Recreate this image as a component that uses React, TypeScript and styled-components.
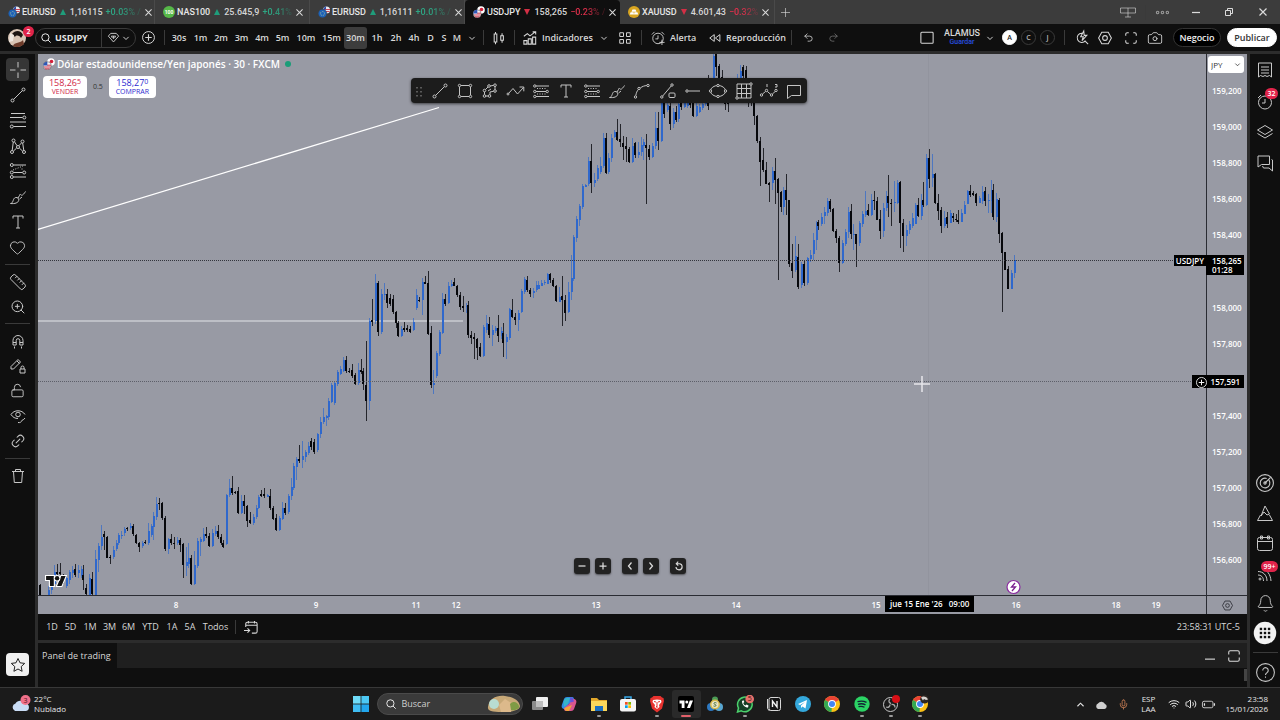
import React from "react";
import styled, { createGlobalStyle, css } from "styled-components";
import { Heart, Ruler, ZoomIn, LockOpen, Link2, Bell, Wifi, Volume2, Mic, Camera, Undo2, Redo2 } from "lucide-react";

const GlobalStyle = createGlobalStyle`
  * { box-sizing: border-box; }
  body { margin: 0; background: #0f0f0f; color: #dbdbdb; font-family: "Open Sans", "Noto Sans", sans-serif; font-size: 9px; line-height: 12px; }
  button, select, input { font: inherit; color: inherit; border: 0; padding: 0; margin: 0; background: none; }
  ul { list-style: none; margin: 0; padding: 0; }
  svg { display: block; flex: none; }
`;

const Page = styled.div`
  display: flex;
  flex-direction: column;
  height: 100vh;
  min-height: 600px;
  overflow: hidden;
`;

const Spacer = styled.div`
  flex: 1;
`;

/* ---------- icons ---------- */

const Glyph = styled.svg.attrs({ viewBox: "0 0 16 16", "aria-hidden": true })<{ $size?: number }>`
  width: ${(p) => p.$size ?? 16}px;
  height: ${(p) => p.$size ?? 16}px;
  fill: none;
  stroke: currentColor;
  stroke-width: 1;
  overflow: visible;
`;

const Dot = ({ x, y, r = 1.5 }: { x: number; y: number; r?: number }) => <circle cx={x} cy={y} r={r} />;

const CrossIcon = () => (
  <Glyph><path d="M8 0v5.500M8 10.500V16M0 8h5.500M10.500 8H16" /></Glyph>
);
const TrendIcon = () => (
  <Glyph><Dot x={2.5} y={13.500} /><Dot x={13.500} y={2.500} /><path d="M3.700 12.300L12.300 3.700" /></Glyph>
);
const FibIcon = () => (
  <Glyph><path d="M1 1.500h14M0 5.500h12.500M0 10h16M3.500 14.500H16" /><Dot x={14.300} y={5.500} /><Dot x={1.800} y={14.500} /></Glyph>
);
const PatternIcon = () => (
  <Glyph>
    <Dot x={3.500} y={2.500} /><Dot x={12.500} y={3.500} /><Dot x={2} y={14} /><Dot x={8} y={9} /><Dot x={14} y={14} />
    <path d="M2.200 12.400L3.300 4M4.500 3.800L7 7.700M9 7.700L11.600 4.800M12.700 5.100L13.800 12.500M3.300 13.200L6.700 10M9.300 10L12.700 13.200" />
  </Glyph>
);
const ForecastIcon = () => (
  <Glyph>
    <Dot x={1.800} y={2} /><Dot x={1.800} y={9.500} /><Dot x={1.800} y={14} /><Dot x={14.200} y={9.500} />
    <path d="M3.500 2H16M3.500 9.500h9M3.500 14H16" /><path d="M3 7l10-4M12 5.500v2" strokeDasharray="1 1.500" />
  </Glyph>
);
const BrushIcon = () => (
  <Glyph><path d="M0.500 14.500c3 0 2.200-5.500 5.200-6 2-.300 3.300 1.200 3 2.900-.400 2.300-3.700 3.600-8.200 3.100zM8 9l1.500-2.500M9.500 10l2.500-2M9.500 6.500c0-1.500 1-1.200 1.700-.500.900.900 2.600-.800 4.300-3.500" /></Glyph>
);
const TextIcon = () => (
  <Glyph><path d="M3 4.500V2h10v2.500M8 2v12M6 14h4" /></Glyph>
);
const RectIcon = () => (
  <Glyph><path d="M2.500 4v8M13.500 4v8M4 2.500h8M4 13.500h8" /><Dot x={2.500} y={2.500} r={1.200} /><Dot x={13.500} y={2.500} r={1.200} /><Dot x={2.500} y={13.500} r={1.200} /><Dot x={13.500} y={13.500} r={1.200} /></Glyph>
);
const PathIcon = () => (
  <Glyph>
    <Dot x={13} y={2.200} r={1.300} /><Dot x={7} y={3} r={1.300} /><Dot x={2.500} y={7.500} r={1.300} /><Dot x={2.500} y={13} r={1.300} /><Dot x={13} y={8} r={1.300} /><Dot x={7.500} y={13} r={1.300} />
    <path d="M8.300 3L11.700 2.300M13 3.500v3.200M6 4L3.500 6.500M2.500 8.800v2.900M3.800 13h2.400M8 11.800V9l3.700-.800M6 8l3-2" />
  </Glyph>
);
const ZigArrowIcon = () => (
  <Glyph><Dot x={0} y={11} r={1} /><path d="M.700 10.300L5 5.500l4.500 5.500 6-6.500M11.500 4H15.800v4.300" /></Glyph>
);
const PositionIcon = () => (
  <Glyph>
    <Dot x={1.800} y={3} r={1.200} /><Dot x={1.800} y={8.500} r={1.200} /><Dot x={14.200} y={8.500} r={1.200} /><Dot x={1.800} y={13.500} r={1.200} />
    <path d="M3 3h13M3 8.500h10M3 13.500h13" /><path d="M4 5.500h9M4 11h9" strokeDasharray="1 1.500" />
  </Glyph>
);
const CurveIcon = () => (
  <Glyph><Dot x={1.500} y={14} r={1.200} /><Dot x={5} y={5.500} r={1.200} /><Dot x={14} y={2.500} r={1.200} /><path d="M1.800 12.500C2.200 10 3 8 4.300 6.700M6.300 5C8.500 3.200 10.500 2.800 12.700 2.500" /></Glyph>
);
const InfoLineIcon = () => (
  <Glyph><Dot x={1.800} y={14} r={1.200} /><Dot x={12} y={2} r={1.200} /><path d="M2.700 13L11.200 3" /><rect x="9" y="10" width="6" height="4.500" rx="1" /></Glyph>
);
const RayIcon = () => (
  <Glyph><Dot x={2} y={8} r={1.200} /><path d="M3.500 8H15" /></Glyph>
);
const EllipseIcon = () => (
  <Glyph><ellipse cx="8" cy="8" rx="7.500" ry="5.500" /><g fill="#1f1f1f"><Dot x={8} y={2.500} r={1.200} /><Dot x={8} y={13.500} r={1.200} /><Dot x={0.500} y={8} r={1.200} /><Dot x={15.500} y={8} r={1.200} /></g></Glyph>
);
const GridIcon = () => (
  <Glyph><path d="M1 1h14v14H1zM5.500 1v14M10.500 1v14M1 5.500h14M1 10.500h14" /><g fill="#1f1f1f"><Dot x={15} y={1} r={1.200} /><Dot x={1} y={15} r={1.200} /></g></Glyph>
);
const WaveIcon = () => (
  <Glyph><Dot x={0.500} y={12} r={1.200} /><Dot x={5.500} y={7.500} r={1.200} /><Dot x={10.500} y={12} r={1.200} /><Dot x={15} y={7.500} r={1.200} /><path d="M1.500 11L4.500 8.500M6.400 8.500L9.500 11.200M11.400 11L14.200 8.500M6 1v3M14 1.500h2v2.500h-2" /></Glyph>
);
const CommentIcon = () => (
  <Glyph><path d="M1.500 2.500h13v10H5.500l-4 3z" /></Glyph>
);
const MagnetIcon = () => (
  <Glyph><path d="M3 12V7.500a5 5 0 0 1 10 0V12h-3.200V7.500a1.800 1.800 0 0 0-3.600 0V12zM3 9.500h3.200M9.800 9.500H13M4.500 13.500v2M11.500 13.500v2" /></Glyph>
);
const PencilLockIcon = () => (
  <Glyph><path d="M1 11V8.500L8 1.500l2.500 2.500-7 7zM7 3l2.500 2.500M10 11h5v4h-5zM11 11V9.500a1.500 1.500 0 0 1 3 0V11" /></Glyph>
);
const EyeIcon = () => (
  <Glyph><path d="M1 6.500C4 1.500 12 1.500 15 6.500M1 6.500c1.800 2.800 4 4 7 4" /><Dot x={8} y={6.500} r={2.300} /><path d="M8 14.500c2 .500 3.500-.500 3.800-2 1.500-.500 2.500-1.500 3.200-2.500" /></Glyph>
);
const TrashIcon = () => (
  <Glyph><path d="M2 3.500h12M5.500 3.500v-2h5v2M3.500 3.500l.800 11h7.400l.800-11" /></Glyph>
);
const StarIcon = () => (
  <Glyph><path d="M8 1.500l2 4.300 4.700.600-3.500 3.200.900 4.700L8 12l-4.100 2.300.900-4.700L1.300 6.400 6 5.800z" /></Glyph>
);
const ListIcon = () => (
  <Glyph><path d="M1.500 1h13v14l-2-1.500-2.500 1-2-1-2 1-2.500-1-2 1.500zM4 5h8M4 8h8M4 11h8" /></Glyph>
);
const ClockIcon = () => (
  <Glyph><circle cx="8" cy="9.500" r="6.500" /><path d="M8 6v4H5M1 5l3-3" /></Glyph>
);
const LayersIcon = () => (
  <Glyph><path d="M8 1.500l7.500 4.500L8 10.500 0.500 6zM0.500 9.500L8 14l7.500-4.500" /></Glyph>
);
const ChatIcon = () => (
  <Glyph><path d="M1 1h11.500v8.500H4.500L1 12zM14.500 4.500l1 .500v11l-3.500-3H6.500l-1-2" /></Glyph>
);
const RadarIcon = () => (
  <Glyph $size={18}><circle cx="8" cy="8" r="7.500" /><path d="M11.500 5.500a4.300 4.300 0 1 1-2-1.500M8 8l5-5" /><Dot x={8} y={8} r={1} /></Glyph>
);
const MountainIcon = () => (
  <Glyph><path d="M8 1L12.500 9l-2.500 1-3-3-3 4zM3.500 10L0.500 15.500h15L12.500 10" /></Glyph>
);
const CalendarIcon = () => (
  <Glyph><rect x="0.500" y="2.500" width="15" height="13" rx="2" /><path d="M0.500 6.500h15" /><path d="M3.500 1h2v3h-2zM10.500 1h2v3h-2z" /></Glyph>
);
const StreamIcon = () => (
  <Glyph><Dot x={3} y={14} r={1} /><path d="M1 10c3 0 5.500 2 5.500 6M1 6.500C6 6.500 10 10 10 16M5 4c5 1 8.500 5 9 12" /></Glyph>
);
const AppsIcon = () => (
  <Glyph $size={24}><circle cx="8" cy="8" r="7.500" fill="#f2f2f2" stroke="none" /><g fill="#0f0f0f" stroke="none">{[4.500, 7.200, 9.900].map((x) => [4.500, 7.200, 9.900].map((y) => <rect key={`${x}-${y}`} x={x} y={y} width="1.600" height="1.600" />))}</g></Glyph>
);
const HelpIcon = () => (
  <Glyph $size={19}><circle cx="8" cy="8" r="7.500" strokeWidth=".900" /><path d="M5.700 6.300a2.300 2.300 0 1 1 3.600 1.800C8.400 8.700 8 9.100 8 10M8 11.300v1.200" strokeWidth=".900" /></Glyph>
);
const ChevronDown = ({ size = 6 }: { size?: number }) => (
  <Glyph $size={size}><path d="M1 5l7 7 7-7" strokeWidth="2.500" /></Glyph>
);
const CloseIcon = ({ size = 7 }: { size?: number }) => (
  <Glyph $size={size}><path d="M1 1l14 14M15 1L1 15" strokeWidth="2.300" /></Glyph>
);
const PlusIcon = ({ size = 10 }: { size?: number }) => (
  <Glyph $size={size}><path d="M8 0v16M0 8h16" strokeWidth="1.600" opacity=".700" /></Glyph>
);
const PlusCircle = ({ size = 13 }: { size?: number }) => (
  <Glyph $size={size}><circle cx="8" cy="8" r="7.300" strokeWidth="1.200" /><path d="M8 4v8M4 8h8" strokeWidth="1.400" /></Glyph>
);
const SearchIcon = ({ size = 10 }: { size?: number }) => (
  <Glyph $size={size}><circle cx="7" cy="7" r="5.800" strokeWidth="1.600" /><path d="M11.300 11.300L15.500 15.500" strokeWidth="1.600" /></Glyph>
);
const HexIcon = ({ size = 14 }: { size?: number }) => (
  <Glyph $size={size}><path d="M4.300 1.500h7.400L15.300 8l-3.600 6.500H4.300L0.700 8z" strokeWidth="1.200" /><circle cx="8" cy="8" r="2.700" strokeWidth="1.200" /></Glyph>
);
const CornersIcon = ({ size = 12 }: { size?: number }) => (
  <Glyph $size={size}><path d="M1 5V3a2 2 0 0 1 2-2h2M11 1h2a2 2 0 0 1 2 2v2M15 11v2a2 2 0 0 1-2 2h-2M5 15H3a2 2 0 0 1-2-2v-2" strokeWidth="1.400" /></Glyph>
);
const FrameIcon = () => (
  <Glyph $size={12}><path d="M1 6V3a2 2 0 0 1 2-2h10a2 2 0 0 1 2 2v3M15 10v3a2 2 0 0 1-2 2H3a2 2 0 0 1-2-2v-3" strokeWidth="1.400" /></Glyph>
);

/* ---------- symbol tabs ---------- */

const TabBar = styled.nav`
  display: flex;
  height: 24px;
  background: #3c3c3c;
`;

const Tab = styled.div<{ $active?: boolean }>`
  display: flex;
  align-items: center;
  width: 155px;
  padding: 0 4px 0 8px;
  gap: 2px;
  background: ${(p) => (p.$active ? "#0f0f0f" : "transparent")};
  border-right: 1px solid ${(p) => (p.$active ? "#0f0f0f" : "#4a4a4a")};
  border-radius: ${(p) => (p.$active ? "4px 4px 0 0" : "0")};
  font-family: Roboto, "Open Sans", sans-serif;
  font-weight: 500;
`;

const TabSymbol = styled.a`
  color: #e6e6e6;
  text-decoration: none;
`;

const TabQuote = styled.span`
  color: #d6d6d6;
`;

const Change = styled.span<{ $up: boolean }>`
  flex: 1;
  padding-left: 1px;
  white-space: nowrap;
  color: ${(p) => (p.$up ? "#2ea583" : "#e0304c")};
  mask-image: linear-gradient(90deg, #000 40%, rgba(0, 0, 0, 0.2));
`;

const Triangle = styled.i<{ $up: boolean }>`
  border: 3px solid transparent;
  border-top-width: ${(p) => (p.$up ? 0 : 6)}px;
  border-bottom-width: ${(p) => (p.$up ? 6 : 0)}px;
  border-${(p) => (p.$up ? "bottom" : "top")}-color: ${(p) => (p.$up ? "#1f9d7b" : "#d32f45")};
  margin: 0 2px;
`;

const IconButton = styled.button<{ $w?: number }>`
  display: flex;
  align-items: center;
  justify-content: center;
  width: ${(p) => p.$w ?? 20}px;
  flex: none;
`;

const Pipe = styled.i<{ $m?: number; $h?: number }>`
  align-self: center;
  width: 1px;
  height: ${(p) => p.$h ?? 15}px;
  margin: 0 ${(p) => p.$m ?? 0}px;
  background: #3a3a3a;
`;

const FlagIcon = ({ kind }: { kind: string }) => (
  <svg width="12" height="12" viewBox="0 0 12 12" aria-hidden>
    {kind === "eur" && (<><circle cx="8.500" cy="4" r="3.500" fill="#e8e8f0" /><path d="M5 3.500h7M5.500 5.500h6" stroke="#d04a58" /><path d="M8 .500h-1L5 3.500h3z" fill="#2b4ba8" /><circle cx="4.500" cy="7.500" r="4.300" fill="#1e63b8" stroke="#3c3c3c" strokeWidth=".500" /><circle cx="4.500" cy="7.500" r="2" fill="none" stroke="#9db8a0" strokeDasharray=".800 .800" /></>)}
    {kind === "jpy" && (<><circle cx="8" cy="4" r="3.800" fill="#fff" /><circle cx="8.500" cy="3.500" r="1.800" fill="#d3203a" /><circle cx="4.200" cy="7.800" r="4" fill="#f0f0f4" stroke="#222" strokeWidth=".400" /><path d="M1 9h6.500M2 10.800h4.500M4 7.200h4" stroke="#d0384c" /><path d="M.300 7.500a4 4 0 0 1 4-3.700v3.700z" fill="#2f57b5" /></>)}
    {kind === "nas" && (<><circle cx="6" cy="6" r="6" fill="#56b848" /><text x="6" y="8" fontSize="5" fontWeight="700" fill="#fff" textAnchor="middle">100</text></>)}
    {kind === "xau" && (<><circle cx="6" cy="6" r="6" fill="#d9a520" /><path d="M4.500 3.500h3l1 2.200h-5zM2.600 6.300h3l.400 2.200H1.800zM6.400 6.300h3l.800 2.200H6z" fill="#fff" /></>)}
  </svg>
);

const tabs = [
  { kind: "eur", symbol: "EURUSD", price: "1,16115", change: "+0.03% /", up: true },
  { kind: "nas", symbol: "NAS100", price: "25.645,9", change: "+0.41%", up: true },
  { kind: "eur", symbol: "EURUSD", price: "1,16111", change: "+0.01% /", up: true },
  { kind: "jpy", symbol: "USDJPY", price: "158,265", change: "−0.23% /", up: false, active: true },
  { kind: "xau", symbol: "XAUUSD", price: "4.601,43", change: "−0.32%", up: false },
];

/* ---------- top toolbar ---------- */

const TopBar = styled.header`
  display: flex;
  align-items: center;
  height: 27px;
  padding: 0 3px 0 8px;
  background: #0f0f0f;
  color: #d8d8d8;
  font-weight: 600;
`;

const Avatar = styled.div`
  position: relative;
  width: 18px;
  height: 18px;
  margin-right: 9px;
`;

const Badge = styled.span<{ $inner?: boolean }>`
  position: absolute;
  top: ${(p) => (p.$inner ? -1 : -3)}px;
  right: ${(p) => (p.$inner ? -1 : -8)}px;
  min-width: 11px;
  height: 11px;
  padding: 0 2px;
  border-radius: 6px;
  background: #e0244a;
  color: #fff;
  font-size: 7px;
  font-weight: 600;
  line-height: 11px;
  text-align: center;
`;

const SearchPill = styled.div`
  display: flex;
  align-items: center;
  width: 101px;
  height: 20px;
  border: 1px solid #3a3a3a;
  border-radius: 10px;
  overflow: hidden;
`;

const SymbolButton = styled.button`
  display: flex;
  align-items: center;
  gap: 4px;
  width: 66px;
  height: 18px;
  padding-left: 5px;
  border-right: 1px solid #3a3a3a;
  color: #e8e8e8;
  font-weight: 700;
`;

const GemButton = styled.button`
  display: flex;
  flex: 1;
  align-items: center;
  justify-content: center;
  gap: 4px;
`;

const TimeButton = styled.button<{ $w: number; $active?: boolean }>`
  width: ${(p) => p.$w}px;
  height: 22px;
  border-radius: 3px;
  text-align: center;
  white-space: nowrap;
  ${(p) => p.$active && css`background: #3d3d3d;`}
`;

const LabelButton = styled.button<{ $w: number; $indent?: boolean }>`
  display: flex;
  align-items: center;
  gap: 5px;
  width: ${(p) => p.$w}px;
  margin-left: ${(p) => (p.$indent ? 5 : 0)}px;
  white-space: nowrap;
`;

const LayoutName = styled.button`
  display: flex;
  flex-direction: column;
  align-items: center;
  width: 36px;
  margin-left: 6px;
  line-height: 10px;
  color: #d8d8d8;
  font-family: Roboto, "Open Sans", sans-serif;
  font-weight: 500;
  small { color: #2950e0; font-size: 7px; line-height: 9px; }
`;

const Round = styled.button<{ $on?: boolean }>`
  width: 15px;
  height: 15px;
  margin: 0 2px;
  border: 1px solid ${(p) => (p.$on ? "#fff" : "#3a3a3a")};
  border-radius: 50%;
  background: ${(p) => (p.$on ? "#fff" : "transparent")};
  color: ${(p) => (p.$on ? "#222" : "#bbb")};
  font-size: 7px;
  line-height: 12px;
  text-align: center;
`;

const Pill = styled.button<{ $light?: boolean }>`
  width: ${(p) => (p.$light ? 50 : 48)}px;
  height: 19px;
  margin-left: 6px;
  border: 1px solid ${(p) => (p.$light ? "#fff" : "#333")};
  border-radius: 10px;
  background: ${(p) => (p.$light ? "#fff" : "#000")};
  color: ${(p) => (p.$light ? "#333" : "#f0f0f0")};
  line-height: 16px;
`;

const timeframes: [string, number][] = [
  ["30s", 22], ["1m", 21], ["2m", 20], ["3m", 21], ["4m", 20], ["5m", 21], ["10m", 26], ["15m", 25], ["30m", 23],
  ["1h", 20], ["2h", 18], ["4h", 18], ["D", 15], ["S", 12], ["M", 14],
];

/* ---------- workspace ---------- */

const Workspace = styled.div`
  display: flex;
  flex: 1;
  min-height: 0;
  gap: 3px;
  padding-top: 3px;
  background: #2c2c2c;
`;

const Sidebar = styled.aside<{ $w: number }>`
  display: flex;
  flex-direction: column;
  align-items: center;
  flex: none;
  width: ${(p) => p.$w}px;
  padding-top: ${(p) => (p.$w > 32 ? 3 : 0)}px;
  background: #0f0f0f;
  color: #c8c8c8;
`;

const ToolGroup = styled.div<{ $h: number }>`
  display: grid;
  grid-auto-rows: 1fr;
  justify-items: center;
  align-items: center;
  height: ${(p) => p.$h}px;
`;

const ToolButton = styled.button<{ $on?: boolean; $light?: boolean }>`
  position: relative;
  display: flex;
  align-items: center;
  justify-content: center;
  width: 23px;
  height: 23px;
  border-radius: 4px;
  ${(p) => p.$on && css`background: #363636;`}
  ${(p) => p.$light && css`background: #f0f0f0; color: #222; margin-bottom: 11px;`}
`;

const Rule = styled.hr`
  width: 25px;
  height: 1px;
  margin: 4px 0;
  border: 0;
  background: #3a3a3a;
`;

const Center = styled.main`
  display: flex;
  flex: 1;
  flex-direction: column;
  min-width: 0;
`;

const ChartGrid = styled.section`
  display: grid;
  flex: 1;
  grid-template-columns: minmax(0, 1fr) 41px;
  grid-template-rows: minmax(0, 1fr) 19px;
  min-height: 0;
  background: #989aa4;
`;

const Plot = styled.div`
  position: relative;
  min-height: 0;
`;

const PlotSvg = styled.svg`
  position: absolute;
  inset: 0;
  width: 100%;
  height: 100%;
`;

const Legend = styled.div`
  position: relative;
  display: flex;
  flex-direction: column;
  gap: 5px;
  width: 270px;
  padding: 3px 0 0 5px;
`;

const TitleRow = styled.h1`
  display: flex;
  align-items: center;
  gap: 2px;
  margin: 0;
  color: #fff;
  font-size: 10px;
  font-weight: 600;
  line-height: 14px;
  white-space: nowrap;
  i { width: 6px; height: 6px; margin-left: 3px; border-radius: 50%; background: #1a9d78; }
`;

const TradeRow = styled.div`
  display: flex;
  align-items: center;
  gap: 6px;
  color: #333;
  font-size: 7px;
`;

const TradeButton = styled.button<{ $buy?: boolean }>`
  display: flex;
  flex-direction: column;
  align-items: center;
  justify-content: center;
  width: ${(p) => (p.$buy ? 47 : 44)}px;
  height: 22px;
  border-radius: 4px;
  background: #fff;
  color: ${(p) => (p.$buy ? "#2b2bd0" : "#d02846")};
  line-height: 9px;
  b { font-size: 9px; font-weight: 400; }
  sup { font-size: 7px; line-height: 0; vertical-align: 2px; }
`;

const FloatBar = styled.div`
  position: absolute;
  top: 24px;
  left: calc(50% - 211px);
  display: flex;
  align-items: center;
  width: 396px;
  height: 25px;
  border-radius: 4px;
  background: #1c1c1c;
  color: #c4c4c4;
  box-shadow: 0 1px 3px rgba(0, 0, 0, 0.6);
`;

const FloatButton = styled.button`
  display: flex;
  flex: 1;
  align-items: center;
  justify-content: center;
`;

const NavBar = styled.div`
  position: absolute;
  bottom: 21px;
  left: calc(50% - 48px);
  display: flex;
  gap: 5px;
`;

const NavButton = styled.button<{ $gap?: boolean }>`
  display: flex;
  align-items: center;
  justify-content: center;
  width: 16px;
  height: 16px;
  margin-left: ${(p) => (p.$gap ? 6 : 0)}px;
  border-radius: 3px;
  background: #222;
  color: #ddd;
  box-shadow: 0 1px 2px rgba(0, 0, 0, 0.5);
`;

const Watermark = styled.svg`
  position: absolute;
  left: 7px;
  bottom: 5px;
`;

const SymbolTag = styled.span`
  position: absolute;
  top: 201px;
  right: 0;
  padding: 0 2px;
  background: #000;
  color: #fff;
  font-size: 8px;
  font-weight: 600;
  line-height: 11px;
`;

const PriceAxis = styled.div`
  position: relative;
  display: flex;
  flex-direction: column;
  padding: 2px 0 17px;
  border-left: 1px solid #2a2c33;
  color: #fff;
  font-size: 8px;
  font-weight: 600;
`;

const Currency = styled.label`
  display: flex;
  align-items: center;
  width: 36px;
  height: 17px;
  margin-left: 1px;
  padding: 0 4px 0 3px;
  border-radius: 3px;
  background: #fff;
  color: #333;
  font-weight: 400;
  select { flex: 1; width: 20px; appearance: none; outline: 0; }
`;

const PriceList = styled.ul`
  display: flex;
  flex: 1;
  flex-direction: column;
`;

const PriceItem = styled.li`
  display: flex;
  flex: 1;
  align-items: center;
  padding-left: 5px;
`;

const PriceTag = styled.div<{ $top: number; $wide?: boolean }>`
  position: absolute;
  top: ${(p) => p.$top}px;
  right: 3px;
  width: ${(p) => (p.$wide ? 52 : 38)}px;
  padding: 1px 0 ${(p) => (p.$wide ? 0 : 1)}px ${(p) => (p.$wide ? 0 : 6)}px;
  display: flex;
  flex-direction: ${(p) => (p.$wide ? "row" : "column")};
  align-items: ${(p) => (p.$wide ? "center" : "flex-start")};
  justify-content: space-evenly;
  background: #000;
  color: #fff;
  line-height: ${(p) => (p.$wide ? 12 : 9)}px;
`;

const TimeAxis = styled.div`
  position: relative;
  display: flex;
  align-items: center;
  overflow: hidden;
  border-top: 1px solid #2a2c33;
  color: #fff;
  font-size: 8px;
  font-weight: 600;
`;

const TimeSlot = styled.span<{ $span: number }>`
  display: flex;
  flex: ${(p) => p.$span} 1 0;
  width: 0;
  justify-content: flex-end;
  b { font-weight: 600; transform: translateX(50%); }
`;

const TimeTag = styled.span`
  position: absolute;
  top: 0;
  left: 847px;
  padding: 0 5px;
  background: #000;
  line-height: 16px;
  white-space: pre;
`;

const AxisCorner = styled.button`
  display: flex;
  align-items: center;
  justify-content: center;
  border-top: 1px solid #2a2c33;
  border-left: 1px solid #2a2c33;
  color: #2a2c33;
`;

const RangeBar = styled.div`
  display: flex;
  align-items: center;
  height: 26px;
  padding: 0 7px 0 5px;
  background: #0f0f0f;
  color: #d8d8d8;
  white-space: nowrap;
`;

const RangeButton = styled.button<{ $w: number }>`
  width: ${(p) => p.$w}px;
  text-align: center;
`;

const ranges: [string, number][] = [
  ["1D", 18], ["5D", 19], ["1M", 20], ["3M", 19], ["6M", 19], ["YTD", 25], ["1A", 18], ["5A", 18], ["Todos", 33],
];

const PanelHead = styled.div`
  display: flex;
  align-items: center;
  height: 25px;
  margin-top: 3px;
  padding-right: 1px;
  background: #1f1f1f;
`;

const PanelTab = styled.button`
  align-self: stretch;
  padding: 0 6px 0 4px;
  background: #0f0f0f;
  color: #d8d8d8;
`;

const PanelBody = styled.div`
  display: flex;
  justify-content: flex-end;
  height: 19px;
  background: #0f0f0f;
  i { width: 3px; height: 12px; margin-top: 1px; background: #444; }
`;

/* ---------- taskbar ---------- */

const Taskbar = styled.footer`
  display: grid;
  grid-template-columns: 1fr auto 1fr;
  align-items: center;
  height: 33px;
  padding: 0 12px 0 11px;
  border-top: 1px solid #383838;
  background: #1b1b1b;
  color: #e6e6e6;
  font-size: 8px;
  line-height: 10px;
`;

const Weather = styled.div`
  display: flex;
  align-items: center;
  gap: 2px;
`;

const Launcher = styled.div`
  display: flex;
  align-items: center;
`;

const WinSearch = styled.label`
  display: flex;
  align-items: center;
  gap: 6px;
  width: 146px;
  height: 22px;
  padding: 0 1px 0 8px;
  border: 1px solid #4a4a4a;
  border-radius: 11px;
  background: #3a3a3a;
  font-size: 9px;
  input { flex: 1; width: 40px; outline: 0; }
  input::placeholder { color: #cfcfcf; }
`;

const Apps = styled.div`
  display: flex;
  width: 409px;
  margin-left: 3px;
`;

const AppButton = styled.button<{ $dot?: string; $on?: boolean }>`
  position: relative;
  display: flex;
  flex: 1;
  align-items: center;
  justify-content: center;
  height: 28px;
  border-radius: 3px;
  background: ${(p) => (p.$on ? "#2a2a2a" : "none")};
  &::after {
    content: "";
    position: absolute;
    bottom: 1px;
    width: ${(p) => (p.$on ? 10 : 4)}px;
    height: 2px;
    border-radius: 1px;
    background: ${(p) => p.$dot ?? "transparent"};
  }
`;

const Tray = styled.div`
  display: flex;
  align-items: center;
  justify-content: flex-end;
`;

const TrayItem = styled.div<{ $w: number }>`
  display: flex;
  justify-content: center;
  width: ${(p) => p.$w}px;
  text-align: center;
`;

const Clock = styled.time`
  width: 50px;
  text-align: right;
`;

const AppIcon = ({ children }: { children: React.ReactNode }) => (
  <svg width="18" height="18" viewBox="0 0 18 18" aria-hidden>{children}</svg>
);

const ChromeArt = () => (
  <>
    <circle cx="9" cy="9" r="8" fill="#fbc116" />
    <path d="M9 9L2.100 5A8 8 0 0 1 15.900 5z" fill="#ea4335" />
    <path d="M9 9L2.100 5a8 8 0 0 0 6.400 12z" fill="#34a853" />
    <circle cx="9" cy="9" r="3.900" fill="#fff" />
    <circle cx="9" cy="9" r="3" fill="#4285f4" />
  </>
);

const apps: { name: string; dot?: string; on?: boolean; art: React.ReactNode }[] = [
  { name: "Vista de tareas", art: <><rect x="1" y="6" width="11" height="9" rx="1" fill="#8a8a8a" /><rect x="5" y="2" width="12" height="10" rx="1" fill="#efefef" /><path d="M5 6h7v6H5z" fill="#bdbdbd" /></> },
  { name: "Copilot", art: <><path d="M7 2h5c2 0 2 2 2.500 4L9 9 5 14C2 14 1 12 2 9.500L4 4c.500-1.300 1.500-2 3-2z" fill="#2f8de4" /><path d="M11 16H6c-2 0-2-2-2-3l5-4 4-5c3 0 4 2 3 4.500L14 14c-.500 1.300-1.500 2-3 2z" fill="#d9568f" /><path d="M4 12l4-3 2-6H7C5 3 4 5 3.500 7z" fill="#37b5c9" /><path d="M12 10l-3 6H7c-2 0-2.500-2-2.500-3z" fill="#f2a63a" /><path d="M10 2.500h2.500l1.500 4-3.500 1z" fill="#6a4fd8" /></> },
  { name: "Explorador", dot: "#9a9a9a", art: <><path d="M1 3h6l2 2h8v11H1z" fill="#e3a82b" /><path d="M1 6h16v10H1z" fill="#fbd75b" /><path d="M5 11h8v5H5z" fill="#1c6fc0" /></> },
  { name: "Store", art: <><path d="M6 4V2h6v2" fill="none" stroke="#38a8e8" strokeWidth="1.500" /><rect x="1" y="4" width="16" height="12.500" rx="2" fill="#f5f5f5" /><path d="M6 7h2.700v2.700H6z" fill="#f25022" /><path d="M9.300 7H12v2.700H9.300z" fill="#7fba00" /><path d="M6 10.300h2.700V13H6z" fill="#00a4ef" /><path d="M9.300 10.300H12V13H9.300z" fill="#ffb900" /></> },
  { name: "Brave", dot: "#9a9a9a", art: <><path d="M5.500 1h7l1.500 1.500L15.500 3 16 6l-2 7.500L9 17.500 4 13.500 2 6l.500-3L4 2.500z" fill="#e8322e" /><path d="M5 5l4-.500L13 5l.500 2-2.500 3 .500 2L9 14l-2.500-2 .500-2-2.500-3z" fill="#fff" /><path d="M6 6.500l2 .500M12 6.500l-2 .500M9 7v4l-1 1h2" stroke="#e8322e" fill="none" /></> },
  { name: "TradingView", dot: "#e0606a", on: true, art: <><rect x="1" y="1" width="16" height="16" rx="2" fill="#000" /><path d="M7.500 13H4.700V8.500H2.500V5.500h5zM13 13h-3l2.800-7.500h3.200z" fill="#fff" /><circle cx="9.800" cy="7" r="1.500" fill="#fff" /></> },
  { name: "Fondos", art: <><circle cx="9" cy="4.500" r="3" fill="#4b9c56" /><circle cx="5" cy="12" r="4" fill="#2d78c0" /><circle cx="13" cy="12" r="4" fill="#58a6d0" /><circle cx="9" cy="9.500" r="5" fill="#d8b84a" /><circle cx="9" cy="9.500" r="3.500" fill="#e9e4c4" /><path d="M10.500 8c-3-1.500-3 1.300-1.500 1.500s1.500 2.500-1.500 1.500" stroke="#47703a" fill="none" /></> },
  { name: "WhatsApp", dot: "#9a9a9a", art: <><path d="M1.500 17l1-4a7.300 7.300 0 1 1 2.800 2.800z" fill="#163f26" stroke="#4bd06c" strokeWidth="1.500" /><path d="M6 6c0 4 3 6.500 6 6.500l.500-2-2-1-1 1C8 10 7.500 9 7.300 8l1-1-.800-1.700z" fill="#fff" /><circle cx="13.700" cy="4" r="4.300" fill="#e8716c" /><text x="13.700" y="6.300" fontSize="7" textAnchor="middle" fill="#3a1010">5</text></> },
  { name: "Notion", art: <><rect x="4" y="2.500" width="11.500" height="13" rx="2" fill="#141414" stroke="#d8d8d8" /><path d="M2.500 4v9.500l2 2.500" fill="none" stroke="#d8d8d8" /><path d="M7.500 12V6l4.500 6V6" fill="none" stroke="#f2f2f2" strokeWidth="1.400" /></> },
  { name: "Telegram", art: <><circle cx="9" cy="9" r="8" fill="#34a8dc" /><path d="M4 9l9-4-1.500 8.500-3-2L7 13v-2.500l4-3.500-5 3z" fill="#fff" /></> },
  { name: "Chrome", art: <ChromeArt /> },
  { name: "Spotify", dot: "#9a9a9a", art: <><circle cx="9" cy="9" r="7.700" fill="#2bd464" /><path d="M4.500 6.700c3-1 6.500-.700 9 .700M5 9.300c2.500-.800 5.500-.500 7.500.600M5.500 11.700c2-.600 4.300-.400 6 .500" stroke="#123" strokeWidth="1.300" fill="none" /></> },
  { name: "OBS", dot: "#9a9a9a", art: <><circle cx="8.500" cy="9.500" r="7" fill="#1a1a1a" stroke="#c9c9c9" /><path d="M8 4c-2 2-1 4 1 4.500M4 12c2.500 1 4-.500 4-2.500M13 12.500c0-2.500-1.500-3.500-3.500-3" stroke="#aaa" strokeWidth="1.300" fill="none" /><circle cx="14" cy="4" r="4" fill="#d80f16" /></> },
  { name: "Chrome (perfil)", dot: "#9a9a9a", art: <><ChromeArt /><circle cx="13.500" cy="4.300" r="4.300" fill="#2b2622" /><path d="M10 2.500c2-2 6-1 7 2l-2 .500-2-1-1 1.500z" fill="#d8d4d0" /></> },
];

/* ---------- candles ---------- */

/* One bar per entry: direction, high, body top, body bottom, low (plot units). */
const BARS = `
d570,571,585,586 d584,585,595,595 d595,595,595,595 d595,595,595,595 u586,590,595,595 u582,584,590,594 u565,572,584,586 d564,572,574,580
d563,572,574,578 d574,577,582,584 u576,578,586,588 u570,572,580,584 u566,570,573,578 d564,569,575,577 u565,570,573,578 u566,569,576,578
d565,575,580,590 d584,588,594,595 u574,578,595,595 d572,579,594,595 u550,559,595,595 u543,546,560,572 u525,537,546,550 d531,534,537,550
d536,537,558,558 d555,557,558,564 u546,550,557,559 u540,543,549,551 u533,535,543,545 u531,535,536,539 u527,529,533,536 d527,528,529,531
u523,526,528,530 d524,526,534,536 d534,535,543,544 d542,543,547,552 u541,543,546,548 d540,542,543,544 u523,531,543,545 u524,526,535,537
u512,516,527,540 u497,504,517,520 d498,503,504,510 d502,503,518,520 d516,518,549,551 u538,539,549,554 d534,539,543,545 d537,543,544,549
u537,540,543,545 d538,540,545,552 d543,544,565,578 u547,562,566,576 u543,558,564,568 d555,558,584,585 u551,565,584,585 u538,541,566,568
u537,539,542,556 u528,534,541,542 d527,534,536,538 d533,536,546,547 u529,533,546,547 u526,531,534,536 d525,531,537,539 d534,537,543,545
d540,543,547,548 u494,495,544,545 u479,488,495,497 d476,488,493,495 d491,492,493,494 d487,491,513,514 u495,501,513,514 d495,501,506,514
d505,506,521,527 d512,520,523,524 u514,517,523,525 u505,508,517,519 u495,497,508,509 d490,494,496,497 d488,494,496,498 u494,495,497,497
d489,496,508,510 d506,508,519,520 d514,518,530,531 u516,518,530,531 u502,508,519,520 d503,508,513,515 u494,496,512,514 u478,487,496,500
u463,466,488,490 u457,459,467,480 d445,459,461,463 u441,456,460,468 u450,452,457,462 u442,446,453,455 d438,441,447,450 d439,442,452,454
u433,434,450,452 u417,422,434,438 u408,417,422,424 u415,416,418,426 u398,401,417,420 u383,385,402,403 u382,383,403,405 u370,372,384,386
u366,369,374,375 u357,360,371,372 d356,360,371,373 d368,371,372,373 d364,370,376,378 d373,375,384,385 u363,370,383,385 d359,370,372,374
d368,371,384,390 d341,385,401,421 u318,321,401,410 d299,320,322,326 u274,283,321,324 d281,283,332,336 u289,294,332,334 u283,294,295,300
d289,294,303,308 d294,298,304,306 d295,299,312,314 d311,312,323,328 d321,323,336,337 u326,329,336,337 d322,328,330,332 d325,328,330,332
d326,329,332,333 u318,322,330,331 u289,295,308,310 d297,300,301,302 u278,282,300,315 d276,282,284,284 d271,283,334,335 d326,333,385,388
u370,383,385,394 u351,353,376,378 u330,332,354,356 u293,299,333,334 d294,299,304,306 u282,286,303,304 u280,284,286,287 d278,282,286,286
d285,286,295,297 d292,295,307,310 d296,306,308,312 u303,306,307,313 d301,305,335,338 d331,335,338,344 d333,337,339,359 d338,339,348,360
d343,347,356,357 u325,327,356,357 u315,323,330,333 d317,324,335,338 u325,330,335,346 u326,328,331,333 d315,328,336,342 u327,331,336,339
d323,333,343,357 u334,337,342,359 u308,309,338,340 d299,310,317,318 d313,317,320,325 u310,313,320,331 u289,291,312,313 u277,279,292,294
d276,280,290,292 d288,290,294,297 u288,291,293,298 u281,285,290,292 u281,285,289,289 u280,283,286,286 u280,282,283,285 u273,274,284,284
d273,274,280,283 d278,280,286,287 d285,286,301,302 u287,297,302,302 d276,296,300,326 d295,300,313,321 u282,292,312,313 u255,278,292,300
u235,237,279,281 u216,219,238,242 u204,206,220,226 u184,186,207,209 u184,185,187,187 u157,161,184,186 d144,161,183,193 u173,180,183,187
u165,168,179,181 u157,166,172,174 u133,138,166,168 d133,138,173,174 u153,158,172,174 u134,138,158,162 u130,132,137,138 d119,132,140,141
d124,139,142,147 d136,143,147,160 d137,146,149,162 d147,149,162,163 u138,146,162,163 d142,143,155,158 u142,152,155,158 u137,145,152,156
u139,142,146,160 d134,145,148,204 d145,149,157,160 u143,146,157,158 u112,128,146,149 d112,128,141,150 u95,103,141,142 d90,103,114,118
u100,105,110,112 d102,106,124,130 u108,112,124,128 d106,112,120,122 u102,104,119,122 d100,103,107,110 u100,102,107,108 u99,102,106,108
d98,102,105,108 d100,103,116,117 u103,106,116,117 u104,107,112,113 u102,104,108,110 u98,100,104,106 d75,88,106,110 u80,85,100,103
u52,56,90,100 d54,54,67,76 d64,66,85,88 d70,77,95,101 d80,84,104,110 d90,94,104,112 u88,92,100,103 u80,86,96,98 u74,78,90,92 u65,71,83,85
d65,67,76,80 d66,70,85,90 d80,90,101,107 d90,95,102,106 d100,103,116,125 d115,116,141,143 d137,141,162,186 d148,160,170,172
d162,170,184,184 d182,183,185,202 u167,171,183,190 d158,171,180,204 d178,179,193,280 d191,192,207,212 u187,190,207,215 d174,190,200,215
d200,200,264,267 d244,263,271,278 u236,256,270,272 d244,257,287,289 u262,264,285,288 d260,264,283,286 u257,258,283,285 u250,255,259,262
u233,240,254,260 u221,223,240,250 d220,222,226,230 u213,217,224,226 u207,212,216,224 u198,201,213,216 d199,201,209,212 d208,209,231,232
d229,231,238,243 d236,238,263,272 u240,243,263,264 u229,232,244,246 u207,212,232,238 d204,211,234,239 u224,234,235,250 d234,234,244,267
u221,223,243,246 u211,214,224,227 u191,211,215,217 d204,210,215,216 u194,200,215,216 d191,200,201,210 d197,201,220,220 d210,219,231,239
u203,208,231,237 u191,196,208,211 d175,196,203,217 d199,203,204,226 u181,202,203,212 u180,183,203,204 d181,182,223,248 d219,223,236,252
u225,230,236,246 u221,224,230,234 u213,218,226,228 u203,205,224,224 d198,205,216,217 u194,201,216,220 d182,200,205,207 u154,158,205,206
d149,158,179,188 u154,174,178,187 d173,174,203,204 d194,203,211,220 d207,210,226,233 u211,218,226,228 d212,217,224,228 u210,213,223,223
d213,216,218,222 d214,219,220,222 d210,220,222,224 u209,213,222,222 u201,205,214,214 u190,191,204,204 d185,191,195,197 d191,193,195,196
d193,194,203,206 u196,198,203,203 u186,192,201,204 d187,191,201,206 u194,200,201,213 u180,190,201,213 d184,190,217,220 u193,199,217,222
d198,200,234,243 d232,233,253,312 d252,252,270,270 d266,269,289,289 u270,273,289,289 u255,260,273,278
`.trim().split(/\s+/).map((bar) => ({ up: bar[0] === "u", v: bar.slice(1).split(",").map(Number) }));

const BAR_STEP = 35 / 12;

const Candles = () => (
  <g shapeRendering="crispEdges">
    {BARS.map(({ up, v: [high, top, bottom, low] }, i) => {
      const x = Math.round(36.800 + i * BAR_STEP);
      return (
        <g key={i} fill={up ? "#2f68cc" : "#07080c"}>
          <rect x={x} y={high} width={1} height={Math.max(low - high, 1)} opacity={up ? 0.700 : 0.800} />
          <rect x={up ? x : x - 1} y={top} width={2} height={Math.max(bottom - top, 1)} />
        </g>
      );
    })}
  </g>
);

const prices = ["159,200", "159,000", "158,800", "158,600", "158,400", "", "158,000", "157,800", "", "157,400", "157,200", "157,000", "156,800", "156,600"];

const days: [string, number][] = [
  ["8", 138], ["9", 140], ["11", 100], ["12", 40], ["13", 140], ["14", 140], ["15", 140], ["16", 140], ["18", 100], ["19", 40],
];

const drawTools = [
  [["Cursor", <CrossIcon />], ["Línea", <TrendIcon />], ["Fibonacci", <FibIcon />], ["Patrones", <PatternIcon />], ["Previsión", <ForecastIcon />], ["Pincel", <BrushIcon />], ["Texto", <TextIcon />], ["Iconos", <Heart size={17} strokeWidth={1.300} />]],
  [["Medir", <Ruler size={18} strokeWidth={1.300} />], ["Acercar", <ZoomIn size={16} strokeWidth={1.500} />]],
  [["Imán", <MagnetIcon />], ["Modo dibujo", <PencilLockIcon />], ["Bloquear", <LockOpen size={15} strokeWidth={1.500} />], ["Ocultar", <EyeIcon />], ["Vincular", <Link2 size={16} strokeWidth={1.500} transform="rotate(-45)" />]],
  [["Eliminar", <TrashIcon />]],
] as [string, React.ReactNode][][];

const floatTools: [string, React.ReactNode][] = [
  ["Línea de tendencia", <TrendIcon />], ["Rectángulo", <RectIcon />], ["Trazado", <PathIcon />], ["Flecha", <ZigArrowIcon />], ["Posición larga", <PositionIcon />],
  ["Texto libre", <TextIcon />], ["Posición corta", <PositionIcon />], ["Pincel libre", <BrushIcon />], ["Curva", <CurveIcon />], ["Línea informativa", <InfoLineIcon />],
  ["Rayo horizontal", <RayIcon />], ["Elipse", <EllipseIcon />], ["Cuadrícula", <GridIcon />], ["Ondas", <WaveIcon />], ["Comentario", <CommentIcon />],
];

export default function App() {
  return (
    <Page>
      <GlobalStyle />
      <TabBar>
        {tabs.map((t, i) => (
          <Tab key={i} $active={t.active}>
            <FlagIcon kind={t.kind} />
            <TabSymbol href="#">{t.symbol}</TabSymbol>
            <Triangle $up={t.up} />
            <TabQuote>{t.price}</TabQuote>
            <Change $up={t.up}>{t.change}</Change>
            <IconButton $w={11} aria-label="Cerrar pestaña"><CloseIcon /></IconButton>
          </Tab>
        ))}
        <IconButton aria-label="Nueva pestaña"><PlusIcon size={9} /></IconButton>
        <Spacer />
        <IconButton $w={34} aria-label="Ventanas">
          <Glyph><path d="M.500 4h15v5H.500zM8 4v9M5 13h6" opacity=".600" /></Glyph>
        </IconButton>
        <Pipe $h={15} />
        <IconButton $w={33} aria-label="Menú">
          <Glyph $size={13}><g opacity=".600" strokeWidth="1.300"><Dot x={2} y={8} /><Dot x={8} y={8} /><Dot x={14} y={8} /></g></Glyph>
        </IconButton>
        <IconButton $w={33} aria-label="Minimizar"><Glyph $size={8}><path d="M0 9h16" strokeWidth="2.500" /></Glyph></IconButton>
        <IconButton $w={34} aria-label="Restaurar"><Glyph $size={8}><path d="M1 5h10v10H1zM5 5V1h10v10h-4" strokeWidth="2" /></Glyph></IconButton>
        <IconButton $w={34} aria-label="Cerrar"><CloseIcon size={8} /></IconButton>
      </TabBar>

      <TopBar>
        <Avatar>
          <svg width="18" height="18" viewBox="0 0 18 18" aria-hidden>
            <circle cx="9" cy="9" r="9" fill="#d8c4b4" />
            <path d="M4 5c3-4 9-4 11 1l-2 3c-2-3-5-3-6-1z" fill="#1d1512" />
            <path d="M5 17c1-4 8-3 10-6l1 4c-3 3-7 4-11 2z" fill="#6d3b2a" />
            <path d="M2 4l4 2-1 6-4 1z" fill="#efe7df" />
          </svg>
          <Badge>2</Badge>
        </Avatar>
        <SearchPill>
          <SymbolButton><SearchIcon />USDJPY</SymbolButton>
          <GemButton aria-label="Tipo de instrumento">
            <Glyph $size={11}><path d="M4 2h8l3.500 4L8 14.500.500 6zM5 6h6M8 6v4M5 6l1.500 3M11 6L9.500 9" strokeWidth="1.300" /></Glyph>
            <ChevronDown />
          </GemButton>
        </SearchPill>
        <IconButton $w={25} aria-label="Añadir símbolo"><PlusCircle /></IconButton>
        <Pipe $m={3} />
        {timeframes.map(([label, w]) => (
          <TimeButton key={label} $w={w} $active={label === "30m"}>{label}</TimeButton>
        ))}
        <IconButton $w={16} aria-label="Más intervalos"><ChevronDown /></IconButton>
        <Pipe $m={3} />
        <IconButton $w={24} aria-label="Velas">
          <Glyph $size={14}><path d="M2.500 3.500h3v9h-3zM4 1v2.500M4 12.500V15M10 5.500h3v5h-3zM11.500 2.500v3M11.500 10.500v3" strokeWidth="1.200" /></Glyph>
        </IconButton>
        <Pipe $m={3} />
        <LabelButton $w={72} $indent>
          <Glyph $size={14}><path d="M1 6l4-3 3 2.500L14 1M11 1h3.500v3M1 15V11h3.500v4zM6 15V9h3.500v6zM11 15V7h3.500v8z" strokeWidth="1.200" /></Glyph>
          Indicadores
        </LabelButton>
        <IconButton $w={17} aria-label="Indicadores favoritos"><ChevronDown /></IconButton>
        <IconButton $w={25} aria-label="Plantillas">
          <Glyph $size={12}><path d="M1 1h5v5H1zM10 1h5v5h-5zM1 10h5v5H1zM10 10h5v5h-5z" strokeWidth="1.300" /></Glyph>
        </IconButton>
        <Pipe $m={4} />
        <LabelButton $w={58} $indent>
          <Glyph $size={14}><circle cx="8" cy="8.500" r="6" /><path d="M8 5v4H5M1 4l3-3M12 1l3 3M12.500 10v6M9.500 13h6" /></Glyph>
          Alerta
        </LabelButton>
        <LabelButton $w={78}>
          <Glyph $size={12}><path d="M7 3.500v9L1 8zM14.500 3.500v9L8.500 8z" strokeWidth="1.300" /></Glyph>
          Reproducción
        </LabelButton>
        <Pipe $m={4} />
        <IconButton $w={25} aria-label="Deshacer"><Undo2 size={11} strokeWidth={1.700} /></IconButton>
        <IconButton $w={24} aria-label="Rehacer"><Redo2 size={11} strokeWidth={1.700} opacity={0.500} /></IconButton>
        <Spacer />
        <IconButton $w={22} aria-label="Diseño"><Glyph $size={14}><rect x="1" y="1.500" width="14" height="12.500" rx="1" strokeWidth="1.200" /></Glyph></IconButton>
        <LayoutName>ALAMUS<small>Guardar</small></LayoutName>
        <IconButton $w={20} aria-label="Más diseños"><ChevronDown /></IconButton>
        <Round $on>A</Round>
        <Round>C</Round>
        <Round>J</Round>
        <Pipe $m={7} />
        <IconButton aria-label="Búsqueda rápida">
          <Glyph $size={14}><path d="M8 2.500a5.300 5.300 0 1 0 4 8.500M11 11l4 4M10 0L6.500 6.500h3L8 11l5.500-6h-3z" strokeWidth="1.200" /></Glyph>
        </IconButton>
        <IconButton $w={26} aria-label="Ajustes"><HexIcon /></IconButton>
        <IconButton $w={25} aria-label="Pantalla completa"><CornersIcon /></IconButton>
        <IconButton $w={24} aria-label="Captura"><Camera size={16} strokeWidth={1.300} /></IconButton>
        <Pill>Negocio</Pill>
        <Pill $light>Publicar</Pill>
      </TopBar>

      <Workspace>
        <Sidebar $w={35}>
          {drawTools.map((group, g) => (
            <React.Fragment key={g}>
              {g > 0 && <Rule />}
              <ToolGroup $h={[203, 50, 126, 25][g]}>
                {group.map(([name, icon]) => (
                  <ToolButton key={name} aria-label={name} $on={name === "Cursor"}>{icon}</ToolButton>
                ))}
              </ToolGroup>
            </React.Fragment>
          ))}
          <Spacer />
          <ToolButton $light aria-label="Favoritos"><StarIcon /></ToolButton>
        </Sidebar>

        <Center>
          <ChartGrid>
            <Plot>
              <PlotSvg viewBox="38 54 1168 541" preserveAspectRatio="none" aria-label="Gráfico de velas USDJPY">
                <path d="M928.500 54V595" stroke="#92949e" />
                <path d="M38 321H463" stroke="#bdbfc6" strokeWidth="2" />
                <path d="M38 229.500L439 107.500" stroke="#fff" strokeWidth="1.300" />
                <Candles />
                <path d="M38 260.500H1206" stroke="#33353d" strokeDasharray="1 1" />
                <path d="M38 381.500H1206" stroke="#5d5f69" strokeDasharray="1 1" />
                <path d="M922 376v16M914 384h16" stroke="#e6e6ea" strokeWidth="1.500" />
                <circle cx="1013.500" cy="587" r="6.500" fill="#fff" stroke="#8b2aa0" strokeWidth="1.200" />
                <path d="M1015 583l-3.500 4h4l-3.500 4" fill="none" stroke="#7b1f90" strokeWidth="1.300" />
              </PlotSvg>
              <Legend>
                <TitleRow><FlagIcon kind="jpy" />Dólar estadounidense/Yen japonés · 30 · FXCM<i /></TitleRow>
                <TradeRow>
                  <TradeButton><b>158,26<sup>5</sup></b>VENDER</TradeButton>
                  0.5
                  <TradeButton $buy><b>158,27<sup>0</sup></b>COMPRAR</TradeButton>
                </TradeRow>
              </Legend>
              <FloatBar role="toolbar">
                <Glyph><path d="M6 4v10M10 4v10" strokeDasharray="1.500 2.500" strokeWidth="1.500" opacity=".500" /></Glyph>
                {floatTools.map(([name, icon]) => <FloatButton key={name} aria-label={name}>{icon}</FloatButton>)}
              </FloatBar>
              <NavBar>
                <NavButton aria-label="Alejar"><Glyph $size={8}><path d="M1 8h14" strokeWidth="2.500" /></Glyph></NavButton>
                <NavButton aria-label="Acercar"><Glyph $size={8}><path d="M1 8h14M8 1v14" strokeWidth="2.500" /></Glyph></NavButton>
                <NavButton $gap aria-label="Izquierda"><Glyph $size={8}><path d="M11 1L5 8l6 7" strokeWidth="2.500" /></Glyph></NavButton>
                <NavButton aria-label="Derecha"><Glyph $size={8}><path d="M5 1l6 7-6 7" strokeWidth="2.500" /></Glyph></NavButton>
                <NavButton $gap aria-label="Restablecer"><Glyph $size={9}><path d="M4 3h5.500a5.500 5.500 0 1 1-6 6M7.500-.500L4 3l3.500 3.500" strokeWidth="2" /></Glyph></NavButton>
              </NavBar>
              <Watermark width="22" height="18" viewBox="-2 1 40 24" aria-hidden>
                <g fill="#111" stroke="#fff" strokeWidth="4" paintOrder="stroke"><path d="M14 22H7V11H0V4h14zM28 22h-8l7.500-18h8z" /><circle cx="20" cy="8" r="4" /></g>
              </Watermark>
              <SymbolTag>USDJPY</SymbolTag>
            </Plot>
            <PriceAxis>
              <Currency>
                <select aria-label="Divisa" defaultValue="JPY"><option>JPY</option></select>
                <ChevronDown size={5} />
              </Currency>
              <PriceList>{prices.map((p, i) => <PriceItem key={i}>{p}</PriceItem>)}</PriceList>
              <PriceTag $top={201}><span>158,265</span><span>01:28</span></PriceTag>
              <PriceTag $top={321} $wide><PlusCircle size={11} />157,591</PriceTag>
            </PriceAxis>
            <TimeAxis>
              {days.map(([d, n]) => <TimeSlot key={d} $span={n}><b>{d}</b></TimeSlot>)}
              <TimeSlot $span={50} />
              <TimeTag>{"jue 15 Ene '26   09:00"}</TimeTag>
            </TimeAxis>
            <AxisCorner aria-label="Ajustes de escala"><HexIcon size={11} /></AxisCorner>
          </ChartGrid>

          <RangeBar>
            {ranges.map(([r, w]) => <RangeButton key={r} $w={w}>{r}</RangeButton>)}
            <Pipe $m={3} $h={14} />
            <IconButton $w={24} aria-label="Ir a la fecha">
              <Glyph $size={14}><path d="M2 8V4.500a2 2 0 0 1 2-2h9a2 2 0 0 1 2 2V13a2 2 0 0 1-2 2H9M2 6h13M5 1v3M12 1v3M0 12h6M4 9.500L6.500 12 4 14.500" strokeWidth="1.200" /></Glyph>
            </IconButton>
            <Spacer />
            23:58:31 UTC-5
          </RangeBar>

          <PanelHead>
            <PanelTab>Panel de trading</PanelTab>
            <Spacer />
            <IconButton $w={24} aria-label="Minimizar panel"><Glyph $size={10}><path d="M0 13h16" strokeWidth="1.800" /></Glyph></IconButton>
            <IconButton $w={24} aria-label="Maximizar panel"><FrameIcon /></IconButton>
          </PanelHead>
          <PanelBody><i /></PanelBody>
        </Center>

        <Sidebar $w={30}>
          <ToolGroup $h={124}>
            <ToolButton aria-label="Lista"><ListIcon /></ToolButton>
            <ToolButton aria-label="Alertas"><ClockIcon /><Badge $inner>32</Badge></ToolButton>
            <ToolButton aria-label="Capas"><LayersIcon /></ToolButton>
            <ToolButton aria-label="Chats"><ChatIcon /></ToolButton>
          </ToolGroup>
          <Spacer />
          <ToolGroup $h={180}>
            <ToolButton aria-label="Filtros"><RadarIcon /></ToolButton>
            <ToolButton aria-label="Pine"><MountainIcon /></ToolButton>
            <ToolButton aria-label="Calendario"><CalendarIcon /></ToolButton>
            <ToolButton aria-label="Noticias"><StreamIcon /><Badge $inner>99+</Badge></ToolButton>
            <ToolButton aria-label="Notificaciones"><Bell size={19} strokeWidth={1.200} /></ToolButton>
            <ToolButton aria-label="Productos"><AppsIcon /></ToolButton>
          </ToolGroup>
          <Rule />
          <ToolGroup $h={30}><ToolButton aria-label="Ayuda"><HelpIcon /></ToolButton></ToolGroup>
        </Sidebar>
      </Workspace>

      <Taskbar>
        <Weather>
          <svg width="21" height="18" viewBox="0 0 21 18" aria-hidden>
            <path d="M4 16a4 4 0 0 1 .500-7.500A5.500 5.500 0 0 1 14 8.500a3.800 3.800 0 0 1 1 7.500z" fill="#c9dcf5" />
            <circle cx="14.500" cy="5" r="5" fill="#f0718a" />
            <text x="14.500" y="7.500" fontSize="7" textAnchor="middle" fill="#501020">3</text>
          </svg>
          <span>22°C<br />Nublado</span>
        </Weather>
        <Launcher>
          <IconButton $w={32} aria-label="Inicio">
            <svg width="16" height="16" viewBox="0 0 16 16" aria-hidden><path d="M0 0h7.600v7.600H0z" fill="#6fdcf8" /><path d="M8.400 0H16v7.600H8.400z" fill="#4cc8f4" /><path d="M0 8.400h7.600V16H0z" fill="#3fbdf2" /><path d="M8.400 8.400H16V16H8.400z" fill="#22a6ec" /></svg>
          </IconButton>
          <WinSearch>
            <SearchIcon />
            <input placeholder="Buscar" aria-label="Buscar" />
            <svg width="34" height="18" viewBox="0 0 34 18" aria-hidden><path d="M1 12C2 3 10 0 18 1s14 4 15 10c0 4-8 6-16 6S0 17 1 12z" fill="#c7a877" /><circle cx="7" cy="9" r="5" fill="#b8dcd2" /><path d="M12 10l6-6 8 5-2 8H14z" fill="#dcb98b" /><path d="M23 9c4-4 8-1 9 2s-5 5-8 4z" fill="#7f9b45" /></svg>
          </WinSearch>
          <Apps>
            {apps.map((a) => <AppButton key={a.name} aria-label={a.name} $dot={a.dot} $on={a.on}><AppIcon>{a.art}</AppIcon></AppButton>)}
          </Apps>
        </Launcher>
        <Tray>
          <TrayItem $w={20}><Glyph $size={7}><path d="M1 12l7-7 7 7" strokeWidth="2.500" /></Glyph></TrayItem>
          <TrayItem $w={22}><svg width="12" height="9" viewBox="0 0 12 9" aria-hidden><path d="M3 9a3 3 0 0 1 0-5.500A4 4 0 0 1 10 4a2.600 2.600 0 0 1-.500 5z" fill="#d0d0d0" /></svg></TrayItem>
          <TrayItem $w={22}><Mic size={11} color="#c07a52" /></TrayItem>
          <TrayItem $w={29}>ESP<br />LAA</TrayItem>
          <TrayItem $w={21}><Wifi size={12} /></TrayItem>
          <TrayItem $w={14}><Volume2 size={12} /></TrayItem>
          <TrayItem $w={20}><Glyph $size={13}><rect x="0.500" y="4" width="13" height="8" rx="2" /><path d="M15.300 6.500v3M3 6.500v3" strokeWidth="1.500" /></Glyph></TrayItem>
          <Clock>23:58<br />15/01/2026</Clock>
        </Tray>
      </Taskbar>
    </Page>
  );
}
